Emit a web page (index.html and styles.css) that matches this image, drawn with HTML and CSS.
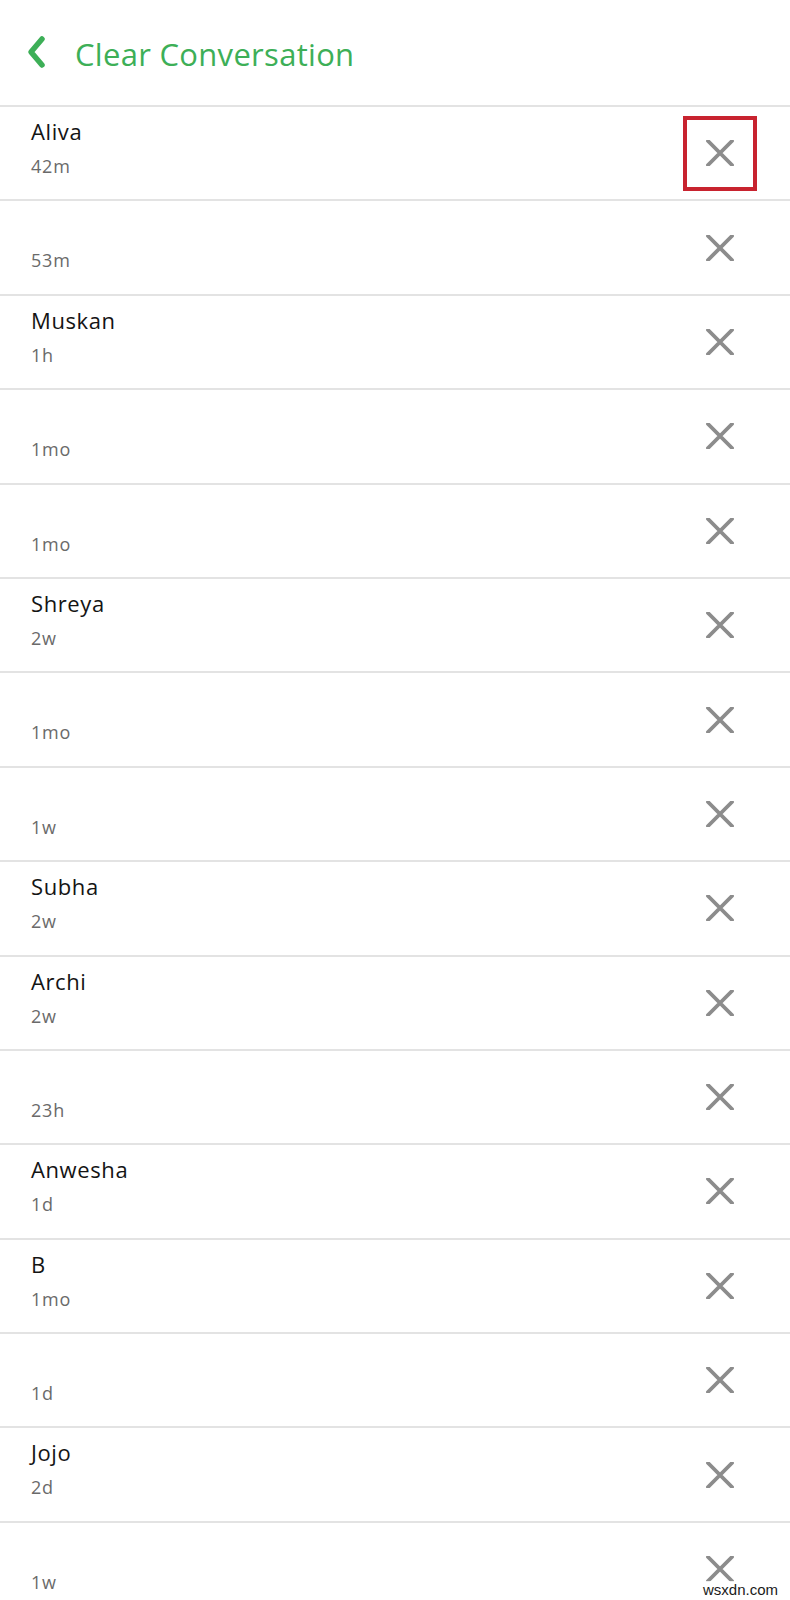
FILE: index.html
```html
<!DOCTYPE html>
<html lang="en">
<head>
    <meta charset="UTF-8">
    <meta name="viewport" content="width=device-width, initial-scale=1.0">
    <title>Clear Conversation</title>
    <link rel="stylesheet" href="styles.css">
</head>
<body>
    <div class="screen">
        <div class="header">
            <svg class="back" width="24" height="34" viewBox="0 0 24 34">
                <path d="M17 4 L6 17 L17 30" fill="none" stroke="#3daf57" stroke-width="5.5" stroke-linecap="round" stroke-linejoin="round"/>
            </svg>
            <h1 class="title">Clear Conversation</h1>
        </div>

        <ul class="list">
            <li class="row">
                <div class="info"><div class="name">Aliva</div><div class="time">42m</div></div>
                <div class="clear selected"><svg width="28" height="26" viewBox="0 0 28 26"><path d="M2 1 L26 25 M26 1 L2 25" stroke="#8c8c8c" stroke-width="3.8" stroke-linecap="round"/></svg></div>
            </li>
            <li class="row">
                <div class="info"><div class="name"></div><div class="time">53m</div></div>
                <div class="clear"><svg width="28" height="26" viewBox="0 0 28 26"><path d="M2 1 L26 25 M26 1 L2 25" stroke="#8c8c8c" stroke-width="3.8" stroke-linecap="round"/></svg></div>
            </li>
            <li class="row">
                <div class="info"><div class="name">Muskan</div><div class="time">1h</div></div>
                <div class="clear"><svg width="28" height="26" viewBox="0 0 28 26"><path d="M2 1 L26 25 M26 1 L2 25" stroke="#8c8c8c" stroke-width="3.8" stroke-linecap="round"/></svg></div>
            </li>
            <li class="row">
                <div class="info"><div class="name"></div><div class="time">1mo</div></div>
                <div class="clear"><svg width="28" height="26" viewBox="0 0 28 26"><path d="M2 1 L26 25 M26 1 L2 25" stroke="#8c8c8c" stroke-width="3.8" stroke-linecap="round"/></svg></div>
            </li>
            <li class="row">
                <div class="info"><div class="name"></div><div class="time">1mo</div></div>
                <div class="clear"><svg width="28" height="26" viewBox="0 0 28 26"><path d="M2 1 L26 25 M26 1 L2 25" stroke="#8c8c8c" stroke-width="3.8" stroke-linecap="round"/></svg></div>
            </li>
            <li class="row">
                <div class="info"><div class="name">Shreya</div><div class="time">2w</div></div>
                <div class="clear"><svg width="28" height="26" viewBox="0 0 28 26"><path d="M2 1 L26 25 M26 1 L2 25" stroke="#8c8c8c" stroke-width="3.8" stroke-linecap="round"/></svg></div>
            </li>
            <li class="row">
                <div class="info"><div class="name"></div><div class="time">1mo</div></div>
                <div class="clear"><svg width="28" height="26" viewBox="0 0 28 26"><path d="M2 1 L26 25 M26 1 L2 25" stroke="#8c8c8c" stroke-width="3.8" stroke-linecap="round"/></svg></div>
            </li>
            <li class="row">
                <div class="info"><div class="name"></div><div class="time">1w</div></div>
                <div class="clear"><svg width="28" height="26" viewBox="0 0 28 26"><path d="M2 1 L26 25 M26 1 L2 25" stroke="#8c8c8c" stroke-width="3.8" stroke-linecap="round"/></svg></div>
            </li>
            <li class="row">
                <div class="info"><div class="name">Subha</div><div class="time">2w</div></div>
                <div class="clear"><svg width="28" height="26" viewBox="0 0 28 26"><path d="M2 1 L26 25 M26 1 L2 25" stroke="#8c8c8c" stroke-width="3.8" stroke-linecap="round"/></svg></div>
            </li>
            <li class="row">
                <div class="info"><div class="name">Archi</div><div class="time">2w</div></div>
                <div class="clear"><svg width="28" height="26" viewBox="0 0 28 26"><path d="M2 1 L26 25 M26 1 L2 25" stroke="#8c8c8c" stroke-width="3.8" stroke-linecap="round"/></svg></div>
            </li>
            <li class="row">
                <div class="info"><div class="name"></div><div class="time">23h</div></div>
                <div class="clear"><svg width="28" height="26" viewBox="0 0 28 26"><path d="M2 1 L26 25 M26 1 L2 25" stroke="#8c8c8c" stroke-width="3.8" stroke-linecap="round"/></svg></div>
            </li>
            <li class="row">
                <div class="info"><div class="name">Anwesha</div><div class="time">1d</div></div>
                <div class="clear"><svg width="28" height="26" viewBox="0 0 28 26"><path d="M2 1 L26 25 M26 1 L2 25" stroke="#8c8c8c" stroke-width="3.8" stroke-linecap="round"/></svg></div>
            </li>
            <li class="row">
                <div class="info"><div class="name">B</div><div class="time">1mo</div></div>
                <div class="clear"><svg width="28" height="26" viewBox="0 0 28 26"><path d="M2 1 L26 25 M26 1 L2 25" stroke="#8c8c8c" stroke-width="3.8" stroke-linecap="round"/></svg></div>
            </li>
            <li class="row">
                <div class="info"><div class="name"></div><div class="time">1d</div></div>
                <div class="clear"><svg width="28" height="26" viewBox="0 0 28 26"><path d="M2 1 L26 25 M26 1 L2 25" stroke="#8c8c8c" stroke-width="3.8" stroke-linecap="round"/></svg></div>
            </li>
            <li class="row">
                <div class="info"><div class="name">Jojo</div><div class="time">2d</div></div>
                <div class="clear"><svg width="28" height="26" viewBox="0 0 28 26"><path d="M2 1 L26 25 M26 1 L2 25" stroke="#8c8c8c" stroke-width="3.8" stroke-linecap="round"/></svg></div>
            </li>
            <li class="row">
                <div class="info"><div class="name"></div><div class="time">1w</div></div>
                <div class="clear"><svg width="28" height="26" viewBox="0 0 28 26"><path d="M2 1 L26 25 M26 1 L2 25" stroke="#8c8c8c" stroke-width="3.8" stroke-linecap="round"/></svg></div>
            </li>
        </ul>

        <div class="watermark">wsxdn.com</div>
    </div>
</body>
</html>
```

FILE: styles.css
```css
html, body {
    margin: 0;
    padding: 0;
    background-color: white;
    font-family: "Open Sans", "Noto Sans", sans-serif;
    overflow: hidden;
}
.screen {
    position: relative;
    width: 790px;
    height: 1600px;
    overflow: hidden;
}
.header {
    height: 105px;
    display: flex;
    align-items: center;
    padding-left: 25px;
    box-sizing: border-box;
}
.back {
    display: block;
    margin-top: -2px;
}
.title {
    margin: 2px 0 0 26px;
    font-size: 31px;
    font-weight: 400;
    letter-spacing: 0.3px;
    color: #3daf57;
}
.list {
    list-style: none;
    margin: 0;
    padding: 0;
}
.row {
    height: 94.4px;
    box-sizing: border-box;
    border-top: 2px solid #e3e3e3;
    display: flex;
    align-items: center;
    justify-content: space-between;
    padding: 0 33px 0 31px;
}
.info {
    align-self: flex-start;
    padding-top: 9px;
}
.name {
    height: 30px;
    font-size: 22px;
    line-height: 30px;
    letter-spacing: 0.6px;
    color: #141414;
}
.time {
    margin-top: 9px;
    font-size: 18px;
    line-height: 22px;
    letter-spacing: 0.8px;
    color: #6a6a6a;
}
.clear {
    width: 74px;
    height: 75px;
    box-sizing: border-box;
    border: 4px solid transparent;
    display: flex;
    align-items: center;
    justify-content: center;
}
.clear svg {
    display: block;
}
.clear.selected {
    border-color: #c8232f;
}
.watermark {
    position: absolute;
    right: 12px;
    bottom: 2px;
    font-family: "Liberation Sans", Arial, sans-serif;
    font-size: 15px;
    color: #1a1a1a;
    background-color: rgba(255,255,255,0.85);
}
```
